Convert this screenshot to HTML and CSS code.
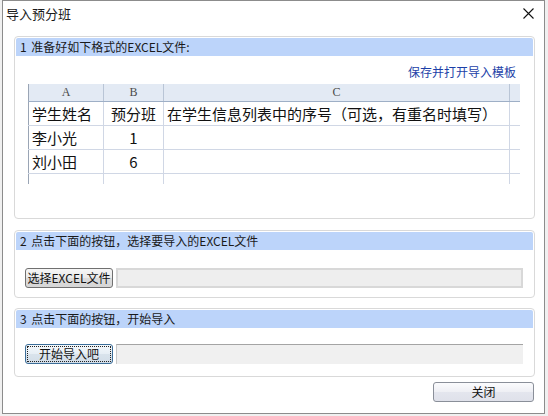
FILE: index.html
```html
<!DOCTYPE html>
<html>
  <head>
    <meta charset="UTF-8" />
    <title>导入预分班</title>
    <link rel="stylesheet" href="styles.css">
  </head>
  <body>
    <div class="window">
      <div class="titlebar">
        <span class="title">导入预分班</span>
        <span class="close-x">
          <svg width="11" height="11" viewBox="0 0 11 11">
            <path d="M0.5 0.5 L10.5 10.5 M10.5 0.5 L0.5 10.5" stroke="#111" stroke-width="1.1" fill="none" />
          </svg>
        </span>
      </div>
      <div class="content">
        <div class="group group-1">
          <div class="group-head">1 准备好如下格式的EXCEL文件:</div>
          <div class="link-row"><a class="link">保存并打开导入模板</a></div>
          <table class="sheet">
            <colgroup>
              <col style="width: 75px" />
              <col style="width: 60px" />
              <col style="width: 346px" />
              <col style="width: 10px" />
            </colgroup>
            <thead>
              <tr>
                <th>A</th>
                <th>B</th>
                <th>C</th>
                <th></th>
              </tr>
            </thead>
            <tbody>
              <tr>
                <td>学生姓名</td>
                <td class="num">预分班</td>
                <td>在学生信息列表中的序号（可选，有重名时填写）</td>
                <td></td>
              </tr>
              <tr>
                <td>李小光</td>
                <td class="num">1</td>
                <td></td>
                <td></td>
              </tr>
              <tr>
                <td>刘小田</td>
                <td class="num">6</td>
                <td></td>
                <td></td>
              </tr>
              <tr class="cut">
                <td></td>
                <td></td>
                <td></td>
                <td></td>
              </tr>
            </tbody>
          </table>
        </div>

        <div class="group group-2">
          <div class="group-head">2 点击下面的按钮，选择要导入的EXCEL文件</div>
          <div class="action-row">
            <button class="btn">选择EXCEL文件</button>
            <div class="field"></div>
          </div>
        </div>

        <div class="group group-3">
          <div class="group-head">3 点击下面的按钮，开始导入</div>
          <div class="action-row">
            <button class="btn btn-focus"><span>开始导入吧</span></button>
            <div class="field field-2"></div>
          </div>
        </div>

        <div class="footer">
          <button class="btn btn-close">关闭</button>
        </div>
      </div>
    </div>
  </body>
</html>
```

FILE: styles.css
```css
body {
  margin: 0;
  padding: 0 0 0 2px;
  background-color: #f0f0f0;
  font-family: "Noto Sans CJK SC", "Noto Sans", sans-serif;
  font-size: 12px;
  color: #1a1a1a;
}
.window {
  box-sizing: border-box;
  width: 543px;
  height: 414px;
  border: 1px solid #8c8c8c;
  background-color: #ffffff;
}
.titlebar {
  height: 28px;
  display: flex;
  align-items: center;
  justify-content: space-between;
  padding: 0 10px 0 3px;
}
.title {
  font-size: 13px;
  line-height: 16px;
  margin-top: -2px;
}
.close-x {
  display: flex;
  margin-top: -4px;
}
.content {
  padding: 7px 9px 0 11px;
}
.group {
  box-sizing: border-box;
  border: 1px solid #d9d9d9;
  border-radius: 4px;
  padding: 1px;
}
.group-1 {
  height: 183px;
}
.group-2 {
  height: 68px;
  margin-top: 11px;
}
.group-3 {
  height: 69px;
  margin-top: 10px;
}
.group-head {
  height: 18px;
  line-height: 18px;
  padding-left: 4px;
  background-color: #bcd4fa;
  border-radius: 2px 2px 0 0;
  word-spacing: 2px;
}
.link-row {
  text-align: right;
  padding-right: 17px;
  margin-top: 8px;
  line-height: 16px;
}
.link {
  color: #1c3fa8;
}
.sheet {
  margin: 4px 0 0 12px;
  table-layout: fixed;
  border-collapse: collapse;
  width: 491px;
  border-left: 1px solid #9aa5b5;
}
.sheet th {
  height: 17px;
  padding: 0;
  font-family: "Liberation Serif", serif;
  font-weight: normal;
  font-size: 12px;
  color: #4a4a4a;
  background-color: #e3eaf4;
  border-right: 1px solid #b9c5d6;
  border-bottom: 1px solid #9eafc6;
}
.sheet th:last-child {
  border-right: none;
}
.sheet td {
  height: 23px;
  padding: 0 0 0 3px;
  font-size: 15px;
  line-height: 20px;
  color: #111111;
  border-right: 1px solid #d0d7e5;
  border-bottom: 1px solid #d0d7e5;
  white-space: nowrap;
  overflow: hidden;
}
.sheet td:last-child {
  border-right: none;
}
.sheet td.num {
  text-align: center;
  padding: 0;
}
.sheet tr.cut td {
  height: 10px;
  border-bottom: none;
}
.action-row {
  display: flex;
  gap: 3px;
  padding: 0 10px 0 9px;
}
.group-2 .action-row {
  margin-top: 18px;
}
.group-3 .action-row {
  margin-top: 16px;
}
.btn {
  box-sizing: border-box;
  width: 88px;
  height: 20px;
  padding: 0;
  font-family: "Noto Sans CJK SC", "Noto Sans", sans-serif;
  font-size: 12px;
  line-height: 16px;
  color: #111111;
  border: 1px solid #707070;
  border-radius: 3px;
  background: linear-gradient(#f6f6f6, #e9e9e9 50%, #dcdcdc 51%, #d6d6d6);
}
.btn-focus {
  border-color: #3c6e99;
  padding: 1px;
  background: linear-gradient(#f4f8fb, #e6eef5 50%, #d9e3ec 51%, #d2dde8);
}
.btn-focus span {
  display: block;
  height: 14px;
  line-height: 14px;
  border: 1px dotted #222222;
}
.field {
  box-sizing: border-box;
  flex: 1;
  height: 20px;
  background-color: #eeeeee;
  border: 2px solid #d8d8d8;
}
.field-2 {
  border: none;
  border-top: 1px solid #a4a4a4;
  border-left: 1px solid #c8c8c8;
  background-color: #f0f0f0;
}
.footer {
  display: flex;
  justify-content: flex-end;
  margin-top: 5px;
  padding-right: 1px;
}
.btn-close {
  width: 101px;
  border-color: #8a8f99;
  background: linear-gradient(#fbfbfd, #eeeff4 50%, #e4e6ee 51%, #dfe1ea);
}
```
